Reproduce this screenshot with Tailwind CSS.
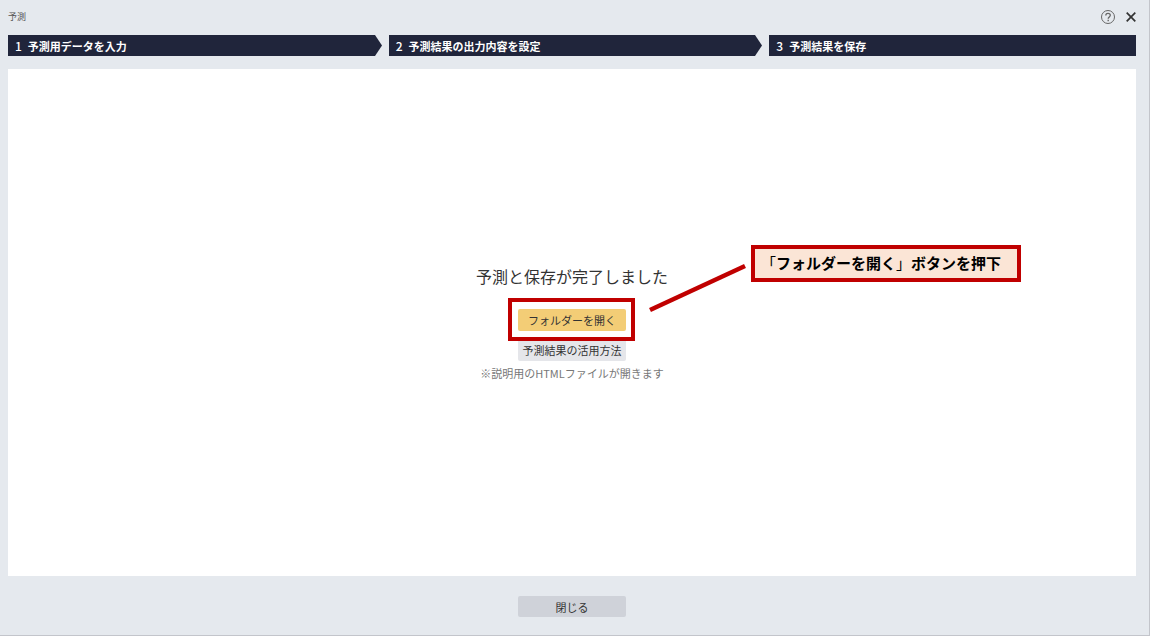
<!DOCTYPE html>
<html lang="ja">

<head>
    <meta charset="UTF-8">
    <meta name="viewport" content="width=device-width, initial-scale=1.0">
    <title>予測</title>
    <script src="https://cdn.jsdelivr.net/npm/@tailwindcss/browser@4"></script>
</head>

<body class="bg-[#e5e9ee] font-['Noto_Sans_CJK_JP',sans-serif] text-[11px] leading-4 text-[#333333]">
    <div class="flex flex-col min-h-screen pl-2 pr-[13px] border-r border-b border-[#c3c5cb]">
        <header class="flex items-center justify-between h-[35px] pb-[2px]">
            <h1 class="text-[9px] text-[#555555]">予測</h1>
            <div class="flex items-center gap-[10px]">
                <button type="button" aria-label="ヘルプ">
                    <svg class="block w-4 h-4" viewBox="0 0 16 16" fill="none" stroke="#666666">
                        <circle cx="8" cy="8" r="6.5" />
                        <path d="M5.8 6.4C5.8 4.9 6.8 4.3 8 4.3s2.3.7 2.3 2c0 1.6-2.1 1.7-2.1 3.4" stroke-width="1.3" />
                        <path d="M8.2 10.8v1.4" stroke-width="1.4" />
                    </svg>
                </button>
                <button type="button" aria-label="閉じる">
                    <svg class="block w-[10px] h-[10px]" viewBox="0 0 10 10" fill="none" stroke="#333333" stroke-width="1.7">
                        <path d="M.7.7l8.6 8.6M9.3.7L.7 9.3" />
                    </svg>
                </button>
            </div>
        </header>

        <!-- steps -->
        <div class="flex h-[21px] text-white font-bold">
            <div class="flex-1 flex items-center gap-[6px] pl-[7px] bg-[#20253b]"><span class="font-medium text-xs">1</span>予測用データを入力</div>
            <svg class="w-[7px] h-[21px] mr-[7px]" viewBox="0 0 7 21" fill="#20253b"><path d="M0 0l7 10.5L0 21z" /></svg>
            <div class="flex-1 flex items-center gap-[6px] pl-[7px] bg-[#20253b]"><span class="font-medium text-xs">2</span>予測結果の出力内容を設定</div>
            <svg class="w-[7px] h-[21px] mr-[7px]" viewBox="0 0 7 21" fill="#20253b"><path d="M0 0l7 10.5L0 21z" /></svg>
            <div class="flex-1 flex items-center gap-[6px] pl-[7px] bg-[#20253b]"><span class="font-medium text-xs">3</span>予測結果を保存</div>
        </div>

        <main class="flex-1 flex flex-col items-center justify-center mt-[13px] bg-white">
            <h2 class="text-base leading-[22px]">予測と保存が完了しました</h2>
            <div class="relative mt-[22px]">
                <button type="button" class="block w-[108px] h-[22px] rounded-xs bg-[#f3cd76]">フォルダーを開く</button>
                <!-- red frame, line and note -->
                <div class="absolute z-10 -top-[11px] -left-[10px] w-[127px] h-[43px] border-4 border-[#c00000] pointer-events-none"></div>
                <svg class="absolute -top-[46px] left-[130px] w-[100px] h-[50px]" viewBox="0 0 100 50" stroke="#c00000" stroke-width="4.5">
                    <path d="M2 47L97 3" />
                </svg>
                <p class="absolute -top-16 left-[233px] w-[270px] h-[37px] flex items-center pl-[6px] border-4 border-[#c00000] bg-[#fbe5d6] text-[15px] font-bold text-black whitespace-nowrap"><span class="font-normal">「</span>フォルダーを開く<span class="font-normal">」</span>ボタンを押下</p>
            </div>
            <button type="button" class="w-[108px] h-[22px] mt-2 rounded-xs bg-[#e5e6ea]">予測結果の活用方法</button>
            <p class="mt-1 text-[#777777]">※説明用のHTMLファイルが開きます</p>
        </main>

        <footer class="flex justify-center pt-5 pb-[18px]">
            <button type="button" class="w-[108px] h-[21px] rounded-xs bg-[#cfd2d9]">閉じる</button>
        </footer>
    </div>
</body>

</html>
